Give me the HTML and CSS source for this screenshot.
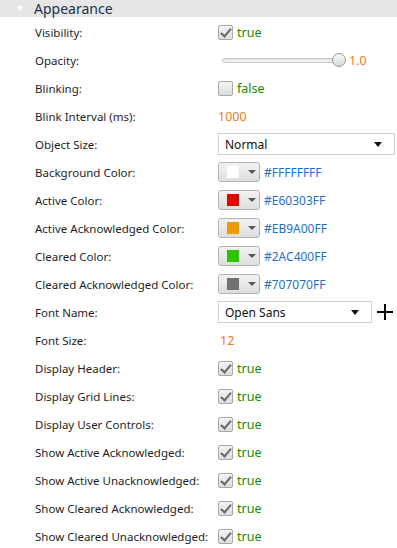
FILE: index.html
```html
<!DOCTYPE html>
<html lang="en">
<head>
    <meta charset="UTF-8">
    <title>Appearance</title>
    <link rel="stylesheet" href="styles.css">
</head>
<body>
    <div class="section-header">
        <span class="arrow"></span>
        <span class="section-title">Appearance</span>
    </div>
    <div class="props">
        <div class="row">
            <div class="label">Visibility:</div>
            <div class="value"><span class="check checked"></span><span class="bool">true</span></div>
        </div>
        <div class="row">
            <div class="label">Opacity:</div>
            <div class="value">
                <div class="slider"><div class="track"></div><div class="thumb"></div></div>
                <span class="num">1.0</span>
            </div>
        </div>
        <div class="row">
            <div class="label">Blinking:</div>
            <div class="value"><span class="check"></span><span class="bool">false</span></div>
        </div>
        <div class="row">
            <div class="label">Blink Interval (ms):</div>
            <div class="value"><span class="num">1000</span></div>
        </div>
        <div class="row">
            <div class="label">Object Size:</div>
            <div class="value"><div class="select wide"><span>Normal</span><span class="caret"></span></div></div>
        </div>
        <div class="row">
            <div class="label">Background Color:</div>
            <div class="value"><div class="color-btn"><span class="swatch" style="background:#FFFFFF"></span><span class="caret small"></span></div><span class="hex">#FFFFFFFF</span></div>
        </div>
        <div class="row">
            <div class="label">Active Color:</div>
            <div class="value"><div class="color-btn"><span class="swatch" style="background:#E60303"></span><span class="caret small"></span></div><span class="hex">#E60303FF</span></div>
        </div>
        <div class="row">
            <div class="label">Active Acknowledged Color:</div>
            <div class="value"><div class="color-btn"><span class="swatch" style="background:#EB9A00"></span><span class="caret small"></span></div><span class="hex">#EB9A00FF</span></div>
        </div>
        <div class="row">
            <div class="label">Cleared Color:</div>
            <div class="value"><div class="color-btn"><span class="swatch" style="background:#2AC400"></span><span class="caret small"></span></div><span class="hex">#2AC400FF</span></div>
        </div>
        <div class="row">
            <div class="label">Cleared Acknowledged Color:</div>
            <div class="value"><div class="color-btn"><span class="swatch" style="background:#707070"></span><span class="caret small"></span></div><span class="hex">#707070FF</span></div>
        </div>
        <div class="row">
            <div class="label">Font Name:</div>
            <div class="value">
                <div class="select font"><span>Open Sans</span><span class="caret"></span></div>
                <svg class="plus" width="16" height="16" viewBox="0 0 16 16"><path d="M8 0V16M0 8H16" stroke="#000" stroke-width="2"/></svg>
            </div>
        </div>
        <div class="row">
            <div class="label">Font Size:</div>
            <div class="value"><span class="num pad">12</span></div>
        </div>
        <div class="row">
            <div class="label">Display Header:</div>
            <div class="value"><span class="check checked"></span><span class="bool">true</span></div>
        </div>
        <div class="row">
            <div class="label">Display Grid Lines:</div>
            <div class="value"><span class="check checked"></span><span class="bool">true</span></div>
        </div>
        <div class="row">
            <div class="label">Display User Controls:</div>
            <div class="value"><span class="check checked"></span><span class="bool">true</span></div>
        </div>
        <div class="row">
            <div class="label">Show Active Acknowledged:</div>
            <div class="value"><span class="check checked"></span><span class="bool">true</span></div>
        </div>
        <div class="row">
            <div class="label">Show Active Unacknowledged:</div>
            <div class="value"><span class="check checked"></span><span class="bool">true</span></div>
        </div>
        <div class="row">
            <div class="label">Show Cleared Acknowledged:</div>
            <div class="value"><span class="check checked"></span><span class="bool">true</span></div>
        </div>
        <div class="row">
            <div class="label">Show Cleared Unacknowledged:</div>
            <div class="value"><span class="check checked"></span><span class="bool">true</span></div>
        </div>
    </div>
</body>
</html>
```

FILE: styles.css
```css
body {
    margin: 0;
    background: #fff;
    font-family: 'Noto Sans', 'Open Sans', sans-serif;
    font-size: 11.5px;
    color: #1e1e1e;
    overflow: hidden;
}
.section-header {
    height: 17px;
    background: #e6e6e6;
    display: flex;
    align-items: center;
}
.arrow {
    width: 0;
    height: 0;
    margin-left: 17px;
    border-left: 3.5px solid transparent;
    border-right: 3.5px solid transparent;
    border-top: 5px solid #fdfdfd;
}
.section-title {
    margin-left: 11px;
    font-size: 14px;
    color: #22334d;
}
.props {
    padding-top: 1px;
}
.row {
    display: flex;
    align-items: center;
    height: 28px;
}
.label {
    width: 183px;
    padding-left: 35px;
    white-space: nowrap;
}
.value {
    display: flex;
    align-items: center;
}
.check {
    width: 13px;
    height: 13px;
    border: 1px solid #a8a8a8;
    border-radius: 2px;
    background: linear-gradient(#f4f4f4, #dcdcdc);
    position: relative;
}
.check.checked::after {
    content: '';
    position: absolute;
    left: 4px;
    top: 0px;
    width: 4px;
    height: 9px;
    border-right: 2px solid #6a6a6a;
    border-bottom: 2px solid #6a6a6a;
    transform: rotate(40deg);
}
.bool {
    margin-left: 4px;
    color: #178a00;
    font-size: 12.5px;
}
.num {
    color: #f07a2a;
    font-size: 12.5px;
}
.num.pad {
    margin-left: 2px;
}
.slider {
    position: relative;
    width: 124px;
    height: 14px;
    margin-left: 4px;
}
.track {
    position: absolute;
    left: 0;
    right: 6px;
    top: 5px;
    height: 3px;
    border: 1px solid #c6c6c6;
    border-radius: 3px;
    background: linear-gradient(#e0e0e0, #f8f8f8);
}
.thumb {
    position: absolute;
    right: 0;
    top: 0;
    width: 12px;
    height: 12px;
    border: 1px solid #9a9a9a;
    border-radius: 50%;
    background: linear-gradient(#fafafa, #d8d8d8);
}
.slider + .num {
    margin-left: 3px;
}
.select {
    height: 20px;
    border: 1px solid #cfcfcf;
    background: #fff;
    display: flex;
    align-items: center;
    justify-content: space-between;
    padding: 0 12px 0 6px;
    box-sizing: content-box;
    color: #111;
    font-size: 12px;
}
.select.wide {
    width: 157px;
}
.select.font {
    width: 134px;
}
.caret {
    width: 0;
    height: 0;
    border-left: 4.5px solid transparent;
    border-right: 4.5px solid transparent;
    border-top: 5px solid #111;
}
.caret.small {
    border-left-width: 4px;
    border-right-width: 4px;
    border-top: 4px solid #555;
    margin-left: 9px;
}
.plus {
    margin-left: 5px;
}
.color-btn {
    width: 42px;
    height: 20px;
    border: 1px solid #b4b4b4;
    border-radius: 3px;
    background: linear-gradient(#f2f2f2, #dedede);
    display: flex;
    align-items: center;
    padding-left: 8px;
    box-sizing: border-box;
}
.swatch {
    width: 12px;
    height: 12px;
}
.hex {
    margin-left: 4px;
    color: #1f6fc5;
    font-size: 12px;
}
```
